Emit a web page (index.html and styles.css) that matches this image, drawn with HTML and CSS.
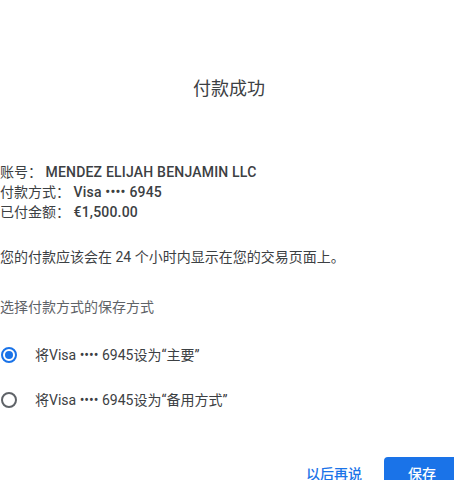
FILE: index.html
```html
<!DOCTYPE html>
<html lang="zh-CN">
<head>
<meta charset="utf-8">
<title>付款成功</title>
<link rel="stylesheet" href="styles.css">
</head>
<body>
<div class="dialog">
  <h1 class="title">付款成功</h1>
  <div class="info">
    <div class="info-row"><span class="label">账号：</span> <span class="value">MENDEZ ELIJAH BENJAMIN LLC</span></div>
    <div class="info-row"><span class="label">付款方式：</span> <span class="value">Visa •••• 6945</span></div>
    <div class="info-row"><span class="label">已付金额：</span> <span class="value">€1,500.00</span></div>
  </div>
  <p class="notice">您的付款应该会在 24 个小时内显示在您的交易页面上。</p>
  <p class="choose">选择付款方式的保存方式</p>
  <div class="options">
    <label class="option"><span class="radio checked"></span><span class="option-text">将Visa •••• 6945设为“主要”</span></label>
    <label class="option"><span class="radio"></span><span class="option-text">将Visa •••• 6945设为“备用方式”</span></label>
  </div>
  <div class="actions">
    <button class="btn btn-text">以后再说</button>
    <button class="btn btn-primary">保存</button>
  </div>
</div>
</body>
</html>
```
FILE: styles.css
```css
html, body {
  margin: 0;
  padding: 0;
  background: #ffffff;
  overflow: hidden;
}
body {
  font-family: Roboto, "Noto Sans CJK SC", sans-serif;
  color: #3c4043;
  font-size: 14px;
}
.dialog {
  width: 472px;
  padding-top: 77px;
}
.title {
  margin: 0;
  padding-right: 14px;
  text-align: center;
  font-size: 18px;
  line-height: 24px;
  font-weight: 400;
  color: #3c4043;
}
.info {
  margin-top: 61px;
}
.info-row {
  line-height: 20px;
  height: 20px;
}
.label {
  color: #3c4043;
}
.value {
  font-weight: 500;
  letter-spacing: 0.2px;
  color: #3c4043;
}
.notice {
  margin: 25px 0 0;
  line-height: 20px;
  color: #3c4043;
}
.choose {
  margin: 30px 0 0;
  line-height: 20px;
  color: #5f6368;
}
.options {
  margin-top: 28px;
  display: flex;
  flex-direction: column;
  gap: 25px;
}
.option {
  display: flex;
  align-items: center;
  height: 20px;
  padding-left: 1px;
}
.radio {
  box-sizing: border-box;
  width: 16px;
  height: 16px;
  border: 2px solid #5f6368;
  border-radius: 50%;
  display: flex;
  align-items: center;
  justify-content: center;
  flex: none;
}
.radio.checked {
  border-color: #1a73e8;
}
.radio.checked::after {
  content: "";
  width: 8px;
  height: 8px;
  border-radius: 50%;
  background: #1a73e8;
}
.option-text {
  margin-left: 18px;
  line-height: 20px;
  color: #3c4043;
}
.actions {
  margin-top: 47px;
  display: flex;
  justify-content: flex-end;
  align-items: center;
  gap: 12px;
}
.btn {
  font-family: Roboto, "Noto Sans CJK SC", sans-serif;
  font-size: 14px;
  font-weight: 500;
  height: 32px;
  border: none;
  border-radius: 4px;
  cursor: pointer;
}
.btn-text {
  background: transparent;
  color: #1a73e8;
  padding: 0 10px;
}
.btn-primary {
  background: #1a73e8;
  color: #ffffff;
  width: 88px;
  padding: 0 24px;
  text-align: left;
}
```
